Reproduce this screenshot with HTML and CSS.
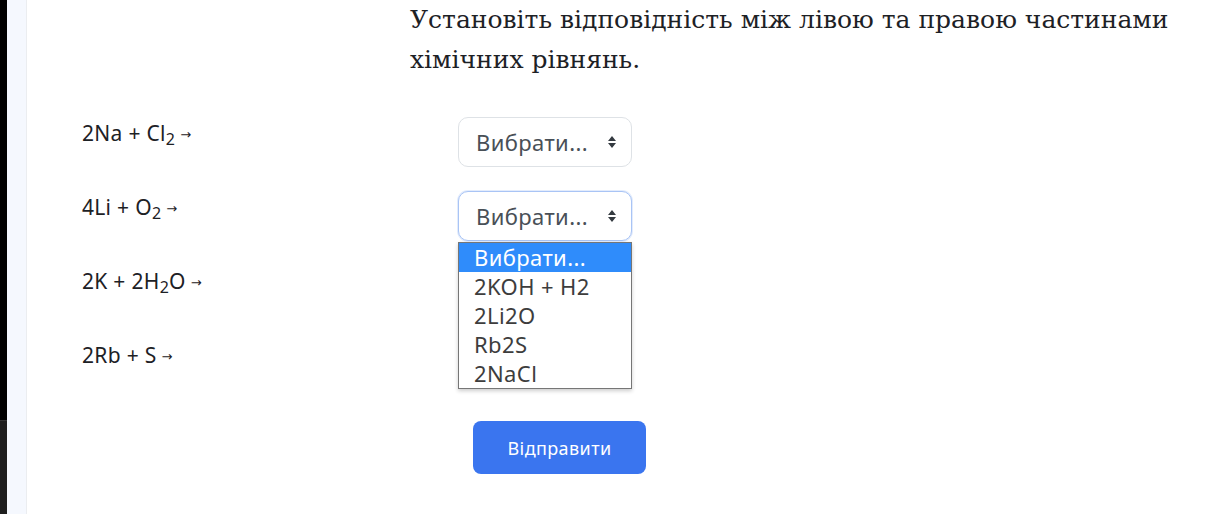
FILE: index.html
```html
<!DOCTYPE html>
<html lang="uk">
<head>
<meta charset="utf-8">
<link rel="stylesheet" href="styles.css">
</head>
<body>
<div class="page">
  <div class="edge"><div class="edge-tab"></div></div>
  <div class="sidebar"></div>
  <main class="main">
    <h2 class="question">Установіть відповідність між лівою та правою частинами хімічних рівнянь.</h2>
    <div class="rows">
      <div class="row">
        <div class="label">2Na + Cl<sub>2</sub><span class="arr">→</span></div>
        <div class="select"><span>Вибрати...</span><svg class="caret" width="10" height="14" viewBox="0 0 10 14"><path d="M5 1 9 6H1z M5 13 9 8H1z" fill="#343a40"/></svg></div>
      </div>
      <div class="row top">
        <div class="label">4Li + O<sub>2</sub><span class="arr">→</span></div>
        <div class="select focus"><span>Вибрати...</span><svg class="caret" width="10" height="14" viewBox="0 0 10 14"><path d="M5 1 9 6H1z M5 13 9 8H1z" fill="#343a40"/></svg>
          <ul class="dropdown">
            <li class="hl">Вибрати...</li>
            <li>2KOH + H2</li>
            <li>2Li2O</li>
            <li>Rb2S</li>
            <li>2NaCl</li>
          </ul>
        </div>
      </div>
      <div class="row">
        <div class="label">2K + 2H<sub>2</sub>O<span class="arr">→</span></div>
        <div class="select covered"></div>
      </div>
      <div class="row">
        <div class="label">2Rb + S<span class="arr">→</span></div>
        <div class="select covered"></div>
      </div>
    </div>
    <div class="actions"><button class="submit">Відправити</button></div>
  </main>
</div>
</body>
</html>
```
FILE: styles.css
```css
html, body { margin: 0; padding: 0; background: #fff; }
body { width: 1225px; height: 514px; overflow: hidden; font-family: "Noto Sans", sans-serif; }
.page { display: flex; height: 514px; }
.edge { width: 7px; background: #000; display: flex; flex-direction: column; justify-content: flex-end; }
.edge-tab { height: 93px; background: #1e1e1e; border-top: 1px solid #333; }
.sidebar { width: 19px; background: #f5f8fe; border-right: 1px solid #ebedf0; }
.main { flex: 1; padding-left: 55px; }
.question {
  margin: 0 0 0 328px;
  font-family: "DejaVu Serif", serif;
  font-weight: normal;
  font-size: 25px;
  line-height: 40px;
  color: #1d2125;
  width: 790px;
}
.rows { margin-top: 37px; display: flex; flex-direction: column; }
.row { display: grid; grid-template-columns: 376px 174px; height: 74px; position: relative; }
.row.top { z-index: 5; }
.label { font-size: 21px; color: #1d2125; padding-top: 4px; line-height: 24px; letter-spacing: 0.3px; }
.label sub { font-size: 16px; vertical-align: -4px; line-height: 0; }
.arr { font-family: "DejaVu Sans", sans-serif; font-size: 13px; margin-left: 5px; position: relative; top: -2px; }
.select {
  position: relative;
  box-sizing: border-box;
  height: 50px;
  border: 1px solid #dee2e6;
  border-radius: 10px;
  display: flex; align-items: center; justify-content: space-between;
  padding: 0 14px 0 17px;
  font-size: 22px; color: #495057; letter-spacing: 0.4px;
  background: #fff;
}
.select.focus { border-color: #a9c4f5; box-shadow: 0 0 0 1px #e3ecfc; }
.dropdown {
  position: absolute; left: -1px; top: 50px; width: 174px;
  margin: 0; padding: 0; list-style: none;
  background: #fff; border: 1px solid #767676;
  box-shadow: 0 2px 4px rgba(0,0,0,0.2);
  font-size: 22px; color: #3d3d3d; box-sizing: border-box; letter-spacing: 0.4px;
}
.dropdown li { height: 29px; line-height: 29px; padding-left: 15px; }
.dropdown li.hl { background: #2f8cfb; color: #fff; }
.actions { margin-top: 8px; padding-left: 391px; }
.submit {
  width: 173px; height: 53px;
  background: #3a75ef; color: #fff; border: none; border-radius: 8px;
  font-family: "Noto Sans", sans-serif; font-size: 18px; letter-spacing: 0.4px;
}
```
